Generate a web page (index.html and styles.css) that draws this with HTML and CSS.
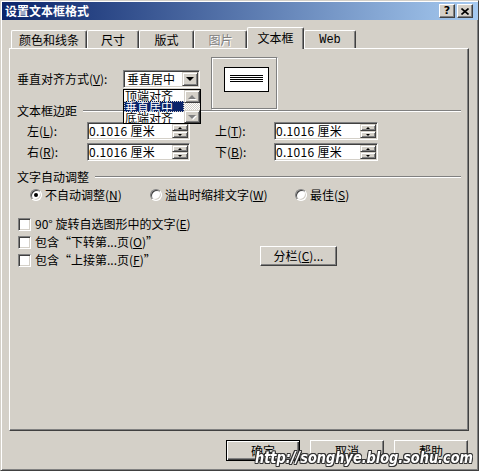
FILE: index.html
```html
<!DOCTYPE html>
<html lang="zh-CN">
<head>
<meta charset="utf-8">
<title>设置文本框格式</title>
<link rel="stylesheet" href="styles.css">
</head>
<body>
<div class="win">
  <div class="titlebar">
    <span class="title">设置文本框格式</span>
    <div class="tbtns">
      <span class="tbtn q">?</span>
      <span class="tbtn"><svg width="8" height="7" viewBox="0 0 8 7"><path d="M0.5 0.5 L7.5 6.5 M7.5 0.5 L0.5 6.5" stroke="#000" stroke-width="1.6"/></svg></span>
    </div>
  </div>
  <div class="body">
    <div class="tabs">
      <div class="tab w1">颜色和线条</div>
      <div class="tab w2">尺寸</div>
      <div class="tab w3">版式</div>
      <div class="tab w4 dis">图片</div>
      <div class="tab w5 sel">文本框</div>
      <div class="tab w6 mono">Web</div>
    </div>
    <div class="panel">
      <div class="row1">
        <span class="lbl1">垂直对齐方式(<u>V</u>):</span>
        <div class="select">
          <span class="sel-text">垂直居中</span>
          <span class="drop"><i class="tri-down"></i></span>
          <div class="list">
            <div class="item">顶端对齐</div>
            <div class="item hi">垂直居中</div>
            <div class="item">底端对齐</div>
            <div class="sb">
              <span class="sbtn"><i class="tri-up dim"></i></span>
              <span class="track"></span>
              <span class="sbtn"><i class="tri-down dim"></i></span>
            </div>
          </div>
        </div>
        <div class="preview"><div class="pv-inner"><i></i><i></i><i></i><i></i></div></div>
      </div>

      <div class="group-h"><span>文本框边距</span><i class="etch"></i></div>

      <div class="spinrow first">
        <span class="lbl2">左(<u>L</u>):</span>
        <div class="input"><span class="val">0.1016 厘米</span><span class="spin"><span class="sp"><i class="su"></i></span><span class="sp"><i class="sd"></i></span></span></div>
        <span class="lbl2 r">上(<u>T</u>):</span>
        <div class="input w"><span class="val">0.1016 厘米</span><span class="spin"><span class="sp"><i class="su"></i></span><span class="sp"><i class="sd"></i></span></span></div>
      </div>
      <div class="spinrow">
        <span class="lbl2">右(<u>R</u>):</span>
        <div class="input"><span class="val">0.1016 厘米</span><span class="spin"><span class="sp"><i class="su"></i></span><span class="sp"><i class="sd"></i></span></span></div>
        <span class="lbl2 r">下(<u>B</u>):</span>
        <div class="input w"><span class="val">0.1016 厘米</span><span class="spin"><span class="sp"><i class="su"></i></span><span class="sp"><i class="sd"></i></span></span></div>
      </div>

      <div class="group-h g2"><span>文字自动调整</span><i class="etch"></i></div>

      <div class="radios">
        <div class="ri r1"><span class="radio on"></span><span>不自动调整(<u>N</u>)</span></div>
        <div class="ri r2"><span class="radio"></span><span>溢出时缩排文字(<u>W</u>)</span></div>
        <div class="ri"><span class="radio"></span><span>最佳(<u>S</u>)</span></div>
      </div>

      <div class="cbblock">
        <div class="cbcol">
          <div class="cbrow"><span class="cb"></span><span>90° 旋转自选图形中的文字(<u>E</u>)</span></div>
          <div class="cbrow"><span class="cb"></span><span>包含“下转第...页(<u>O</u>)”</span></div>
          <div class="cbrow"><span class="cb"></span><span>包含“上接第...页(<u>F</u>)”</span></div>
        </div>
        <div class="btn cols">分栏(<u>C</u>)...</div>
      </div>
    </div>
    <div class="btnrow">
      <div class="btn dflt">确定</div>
      <div class="btn">取消</div>
      <div class="btn">帮助</div>
    </div>
  </div>
  <div class="watermark">http://songhye.blog.sohu.com</div>
</div>
</body>
</html>
```
FILE: styles.css
```css
* { box-sizing: border-box; }
html, body { margin: 0; padding: 0; }
body {
  width: 479px; height: 471px; overflow: hidden;
  background: #d4d0c8;
  font-family: "Noto Sans CJK SC", "Liberation Sans", sans-serif;
  font-size: 12px; color: #000;
}
u { text-decoration: underline; text-underline-offset: 1px; }

.win {
  position: relative;
  width: 479px; height: 471px;
  overflow: hidden;
  background: #d4d0c8;
  border: 1px solid;
  border-color: #d4d0c8 #404040 #404040 #d4d0c8;
  box-shadow: inset 1px 1px #fff, inset -1px -1px #808080;
  padding: 1px 0 1px 1px;
}

.titlebar {
  height: 18px;
  display: flex; align-items: center; justify-content: space-between;
  background: linear-gradient(to right, #0a246a, #a6caf0);
  padding: 0 5px 0 3px;
}
.title { color: #fff; font-weight: bold; font-size: 12px; line-height: 18px; }
.tbtns { display: flex; gap: 2px; }
.tbtn {
  width: 16px; height: 14px;
  background: #d4d0c8;
  border: 1px solid; border-color: #fff #404040 #404040 #fff;
  box-shadow: inset -1px -1px #808080;
  display: flex; align-items: center; justify-content: center;
}
.tbtn.q { font-family: "DejaVu Sans", sans-serif; font-weight: bold; font-size: 11px; line-height: 12px; }

.body { padding: 7px 0 0 7px; }

.tabs {
  display: flex; align-items: flex-end;
  height: 21px; padding-left: 2px;
  position: relative; z-index: 2;
}
.tab {
  height: 18px;
  display: flex; align-items: center; justify-content: center;
  background: #d4d0c8;
  border-top: 1px solid #fff; border-left: 1px solid #fff;
  border-right: 1px solid #404040;
  box-shadow: inset -1px 0 #808080;
  border-radius: 2px 2px 0 0;
  line-height: 14px; padding-top: 1px;
}
.tab.sel { height: 22px; margin-bottom: -1px; padding-bottom: 3px; }
.tab.dis { color: #808080; text-shadow: 1px 1px #fff; }
.tab.mono { font-family: "Liberation Mono", monospace; font-size: 12px; }
.w1 { width: 76px; } .w2 { width: 52px; } .w3 { width: 55px; }
.w4 { width: 53px; } .w5 { width: 57px; } .w6 { width: 52px; }

.panel {
  position: relative; z-index: 1;
  width: 460px; height: 383px;
  border: 1px solid; border-color: #fff #404040 #404040 #fff;
  box-shadow: inset -1px -1px #808080;
}

.row1 { display: flex; align-items: flex-start; padding: 8px 0 0 7px; }
.lbl1 { width: 106px; margin-top: 15px; line-height: 14px; }

.select, .input {
  position: relative;
  display: flex; align-items: center;
  background: #fff;
  border: 1px solid; border-color: #808080 #fff #fff #808080;
  box-shadow: inset 1px 1px #404040, inset -1px -1px #d4d0c8;
  padding: 1px;
}
.select { width: 77px; height: 18px; margin-top: 13px; }
.sel-text { flex: 1; padding-left: 2px; line-height: 14px; }
.drop, .sbtn, .sp {
  display: flex; align-items: center; justify-content: center;
  background: #d4d0c8;
  border: 1px solid; border-color: #d4d0c8 #404040 #404040 #d4d0c8;
  box-shadow: inset 1px 1px #fff, inset -1px -1px #808080;
}
.drop { width: 16px; height: 14px; }
.tri-down { width: 0; height: 0; border-left: 4px solid transparent; border-right: 4px solid transparent; border-top: 4px solid #000; }
.tri-up { width: 0; height: 0; border-left: 4px solid transparent; border-right: 4px solid transparent; border-bottom: 4px solid #000; }
.tri-up.dim { border-bottom-color: #808080; filter: drop-shadow(1px 1px 0 #fff); }
.tri-down.dim { border-top-color: #808080; filter: drop-shadow(1px 1px 0 #fff); }

.list {
  position: absolute; left: -1px; top: 18px;
  width: 78px; height: 35px;
  background: #fff; border: 1px solid #000;
  z-index: 5;
  padding-right: 16px;
}
.item { height: 11px; line-height: 11px; padding-left: 1px; font-size: 12px; white-space: nowrap; }
.item.hi { background: #0a246a; color: #fff; outline: 1px dotted #d4d0c8; outline-offset: -1px; }
.sb {
  position: absolute; right: 0; top: 0; bottom: 0; width: 16px;
  display: flex; flex-direction: column;
}
.sbtn { height: 13px; flex: none; }
.track {
  flex: 1;
  background-color: #fff;
  background-image: repeating-conic-gradient(#d4d0c8 0 25%, #fff 0 50%);
  background-size: 2px 2px;
}

.preview {
  width: 67px; height: 53px;
  margin-left: 11px; margin-bottom: -5px;
  border: 1px solid; border-color: #808080 #fff #fff #808080;
  box-shadow: inset -1px -1px #808080, inset 1px 1px #fff;
  padding: 9px 0 0 12px;
}
.pv-inner {
  width: 45px; height: 25px;
  background: #fff; border: 1px solid #000;
  display: flex; flex-direction: column; align-items: center;
  padding-top: 7px; gap: 1px;
}
.pv-inner i { display: block; width: 33px; height: 1px; background: #000; }

.group-h { display: flex; align-items: center; height: 12px; padding: 0 7px; line-height: 12px; }
.etch { flex: 1; height: 2px; border-top: 1px solid #808080; border-bottom: 1px solid #fff; margin-left: 6px; }
.group-h.g2 { margin-top: 10px; }

.spinrow { display: flex; align-items: center; padding-left: 17px; height: 18px; margin-top: 3px; }
.spinrow.first { margin-top: 5px; }
.lbl2 { width: 60px; line-height: 14px; }
.lbl2.r { width: 59px; margin-left: 25px; }
.input { width: 103px; height: 18px; }
.input.w { width: 104px; }
.val { flex: 1; line-height: 14px; white-space: nowrap; letter-spacing: 0.3px; }
.spin { width: 16px; height: 14px; display: flex; flex-direction: column; }
.sp { height: 7px; flex: none; }
.su { width: 0; height: 0; border-left: 2px solid transparent; border-right: 2px solid transparent; border-bottom: 2px solid #000; }
.sd { width: 0; height: 0; border-left: 2px solid transparent; border-right: 2px solid transparent; border-top: 2px solid #000; }

.radios { display: flex; align-items: center; height: 12px; margin-top: 6px; padding-left: 20px; }
.ri { display: flex; align-items: center; gap: 3px; line-height: 14px; }
.ri.r1 { width: 120px; }
.ri.r2 { width: 145px; }
.radio {
  width: 12px; height: 12px; border-radius: 50%;
  background: #fff;
  border: 1px solid; border-color: #808080 #fff #fff #808080;
  box-shadow: inset 1px 1px #404040, inset -1px -1px #d4d0c8;
  display: flex; align-items: center; justify-content: center;
}
.radio.on::after { content: ""; width: 4px; height: 4px; border-radius: 50%; background: #000; }

.cbblock { display: flex; margin-top: 14px; }
.cbcol { width: 250px; padding-left: 8px; }
.cbrow { display: flex; align-items: center; gap: 4px; height: 18px; line-height: 14px; }
.cb {
  width: 13px; height: 13px; background: #fff;
  border: 1px solid; border-color: #808080 #fff #fff #808080;
  box-shadow: inset 1px 1px #404040, inset -1px -1px #d4d0c8;
}

.btn {
  display: flex; align-items: center; justify-content: center;
  background: #d4d0c8;
  border: 1px solid; border-color: #fff #404040 #404040 #fff;
  box-shadow: inset -1px -1px #808080;
  line-height: 14px;
}
.btn.cols { width: 77px; height: 20px; align-self: flex-end; margin-bottom: 3px; }

.btnrow { display: flex; justify-content: flex-end; gap: 10px; margin-top: 9px; padding-right: 10px; }
.btnrow .btn { width: 74px; height: 21px; }
.btn.dflt {
  border: 1px solid #000;
  box-shadow: inset 1px 1px #fff, inset -1px -1px #404040, inset -2px -2px #808080;
}

.watermark {
  position: absolute; left: 254px; top: 447px;
  font-family: "DejaVu Sans", sans-serif; font-weight: bold; font-style: italic;
  font-size: 15px; line-height: 20px; color: #fff; white-space: nowrap;
  transform: scaleX(0.86); transform-origin: left center;
  text-shadow: 1px 0 #333, -1px 0 #333, 0 1px #333, 0 -1px #333,
               1px 1px #333, -1px -1px #333, 1px -1px #333, -1px 1px #333;
  z-index: 10;
}
```
